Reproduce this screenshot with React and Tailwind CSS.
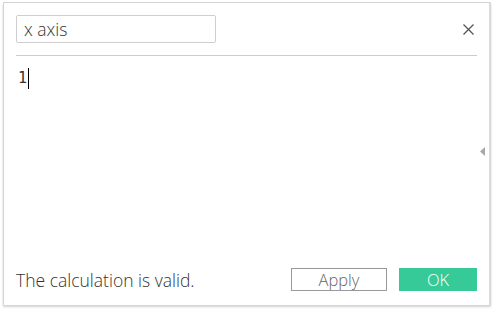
export default function App() {
  return (
    <div className="w-[494px] h-[310px] bg-white pt-[2px] pl-[3px] font-['Open_Sans','Noto_Sans',sans-serif]">
      <div className="flex w-[488px] h-[303px] bg-white border-l border-t border-[#d4d4d4] border-r-2 border-r-[#dadada] shadow-[0_2px_2px_rgba(0,0,0,0.18)]">
        {/* Main column */}
        <div className="flex flex-col flex-1 pl-[12px]">
          {/* Header */}
          <div className="pt-[12px]">
            <div className="flex items-center justify-between">
              <div className="w-[200px] h-[28px] border border-[#cfcfcf] rounded-[2px] flex items-center pl-[7px] text-[17.5px] font-light text-[#333]">
                x axis
              </div>
              <svg className="w-[11px] h-[11px] mr-[3px]" viewBox="0 0 11 11" fill="none" stroke="#555" strokeWidth="1.3">
                <path d="M0.5 0.5L10.5 10.5M10.5 0.5L0.5 10.5" />
              </svg>
            </div>
            <div className="mt-[12px] h-px bg-[#cccccc]" />
          </div>

          {/* Editor */}
          <div className="flex-1 pt-[12px] pl-[2px]">
            <div className="flex items-center h-[21px] text-[15px] text-[#333] font-['DejaVu_Sans_Mono',monospace]">
              <span>1</span>
              <span className="w-px h-[21px] bg-black ml-[1px]" />
            </div>
          </div>

          {/* Footer */}
          <div className="flex items-center justify-between pb-[12px]">
            <span className="text-[17.5px] font-light text-[#333]">The calculation is valid.</span>
            <div className="flex gap-[12px]">
              <button className="w-[96px] h-[23px] border border-[#999] text-[16.5px] font-light leading-none text-[#666] bg-white">
                Apply
              </button>
              <button className="w-[78px] h-[23px] bg-[#35ca98] text-[16.5px] font-light leading-none text-white">
                OK
              </button>
            </div>
          </div>
        </div>

        {/* Side strip with collapse arrow */}
        <div className="w-[12px] flex items-center justify-center pb-[6px]">
          <svg className="w-[5px] h-[9px] mr-[2px]" viewBox="0 0 5 9">
            <path d="M5 0L0 4.5L5 9Z" fill="#a8a8a8" />
          </svg>
        </div>
      </div>
    </div>
  );
}
